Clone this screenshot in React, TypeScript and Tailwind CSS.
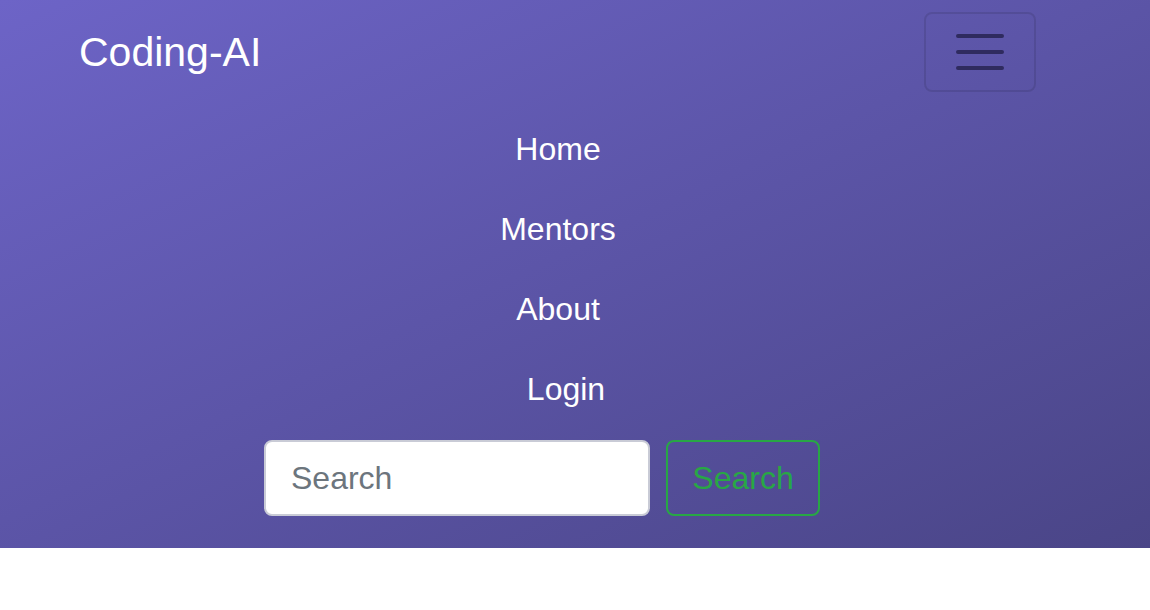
import React from 'react';

const links = ['Home', 'Mentors', 'About'];

export default function App() {
  return (
    <div className="w-[1150px] h-[610px] bg-white" style={{ fontFamily: '"Liberation Sans", Arial, sans-serif' }}>
      <nav className="h-[548px] bg-linear-to-br from-[#6d64c7] to-[#4a4587]">
        <div className="mx-[48px] w-[1020px] px-[31px] pt-[12px] pb-[32px]">
          {/* brand + toggler */}
          <div className="flex items-center justify-between h-[80px]">
            <a className="text-[41px] leading-none text-white">Coding-AI</a>
            <button className="w-[112px] h-[80px] mr-[1px] rounded-[8px] border-2 border-black/10 flex items-center justify-center">
              <svg width="60" height="48" viewBox="0 0 60 48" fill="none">
                <path d="M8 8h44M8 24h44M8 40h44" stroke="#2f2b5f" strokeWidth="4" strokeLinecap="round" />
              </svg>
            </button>
          </div>

          {/* collapsed menu */}
          <ul className="mt-[17px] flex flex-col items-center text-[32px] text-white">
            {links.map((l) => (
              <li key={l} className="h-[80px] flex items-center leading-none">{l}</li>
            ))}
            <li className="h-[80px] flex items-center leading-none ml-4">Login</li>
          </ul>

          <form className="mt-[11px] flex justify-center gap-[16px]" onSubmit={(e) => e.preventDefault()}>
            <input
              placeholder="Search"
              className="w-[386px] h-[76px] rounded-[8px] border-2 border-[#c9cbd6] bg-white px-[25px] text-[32px] text-[#495057] placeholder-[#6c757d] outline-none"
            />
            <button className="w-[154px] h-[76px] mr-[32px] rounded-[8px] border-2 border-[#28a745] text-[32px] text-[#28a745]">
              Search
            </button>
          </form>
        </div>
      </nav>
    </div>
  );
}
